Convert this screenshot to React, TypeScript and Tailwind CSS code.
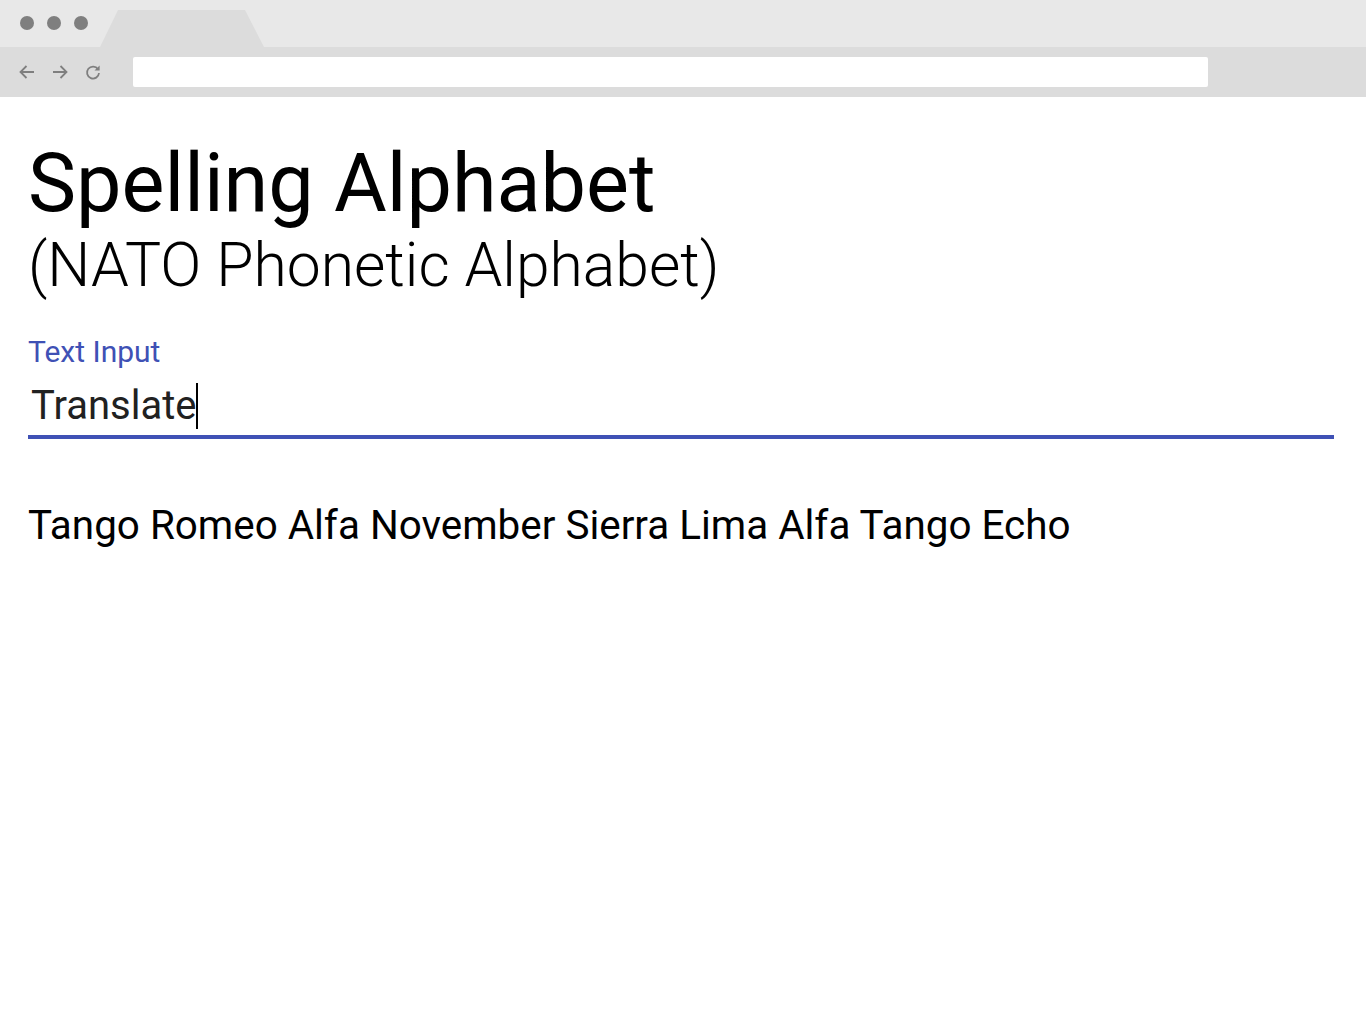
import { useState } from "react";

const BrowserChrome = () => {
  return (
    <div className="bg-[#dcdcdc]">
      {/* TAB STRIP */}
      <div className="relative h-[47px] bg-[#e8e8e8]">
        <div className="absolute left-[20px] top-[16px] flex gap-[13px]">
          <span className="w-[14px] h-[14px] rounded-full bg-[#7f7f7f]" />
          <span className="w-[14px] h-[14px] rounded-full bg-[#7f7f7f]" />
          <span className="w-[14px] h-[14px] rounded-full bg-[#7f7f7f]" />
        </div>
        <svg className="absolute left-[100px] top-[10px]" width="164" height="37" viewBox="0 0 164 37">
          <polygon points="0,37 18,0 145,0 164,37" fill="#dcdcdc" />
        </svg>
      </div>
      {/* TOOLBAR */}
      <div className="flex items-center h-[50px]">
        <div className="flex items-center gap-[15px] pl-[18px] text-[#7f7f7f]">
          <svg width="18" height="18" viewBox="0 0 18 18" fill="none" stroke="currentColor" strokeWidth="1.8">
            <path d="M16 9H2.5M8.5 3L2.5 9l6 6" />
          </svg>
          <svg width="18" height="18" viewBox="0 0 18 18" fill="none" stroke="currentColor" strokeWidth="1.8">
            <path d="M2 9h13.5M9.5 3l6 6-6 6" />
          </svg>
          <svg width="18" height="18" viewBox="0 0 18 18" fill="none" stroke="currentColor" strokeWidth="1.8">
            <path d="M14 6.2A6 6 0 1 0 15 10" />
            <polygon points="15.6,2.5 15.6,7.6 10.5,7.6" fill="currentColor" stroke="none" />
          </svg>
        </div>
        <div className="ml-[31px] w-[1075px] h-[30px] bg-white rounded-[2px]" />
      </div>
    </div>
  );
};

const PHONETIC: Record<string, string> = {
  a: "Alfa", b: "Bravo", c: "Charlie", d: "Delta", e: "Echo", f: "Foxtrot",
  g: "Golf", h: "Hotel", i: "India", j: "Juliett", k: "Kilo", l: "Lima",
  m: "Mike", n: "November", o: "Oscar", p: "Papa", q: "Quebec", r: "Romeo",
  s: "Sierra", t: "Tango", u: "Uniform", v: "Victor", w: "Whiskey",
  x: "X-ray", y: "Yankee", z: "Zulu",
};

const App = () => {
  const [text] = useState("Translate");
  const spelled = text
    .toLowerCase()
    .split("")
    .map((c) => PHONETIC[c])
    .filter(Boolean)
    .join(" ");

  return (
    <div className="min-h-[1024px] bg-white font-['Roboto',sans-serif]">
      <BrowserChrome />

      <div className="px-[28px] pt-[40px]">
        <h1 className="text-[81px] leading-[94px] text-black font-normal">
          Spelling Alphabet
        </h1>
        <h2 className="text-[60.6px] leading-[70px] text-black font-light">
          (NATO Phonetic Alphabet)
        </h2>

        {/* TEXT FIELD */}
        <div className="mt-[34px] pr-[4px]">
          <label className="block text-[30px] leading-[34px] text-[#3f51b5]">Text Input</label>
          <div className="relative mt-[14px] border-b-[4px] border-[#3f51b5] pb-[6px]">
            <span className="pl-[3px] text-[40px] leading-[46px] text-[#212121]">{text}</span>
            <span className="inline-block align-top w-[2px] h-[46px] bg-black" />
          </div>
        </div>

        <p className="mt-[64px] text-[40.4px] leading-[46px] text-black">{spelled}</p>
      </div>
    </div>
  );
};

export default App;
